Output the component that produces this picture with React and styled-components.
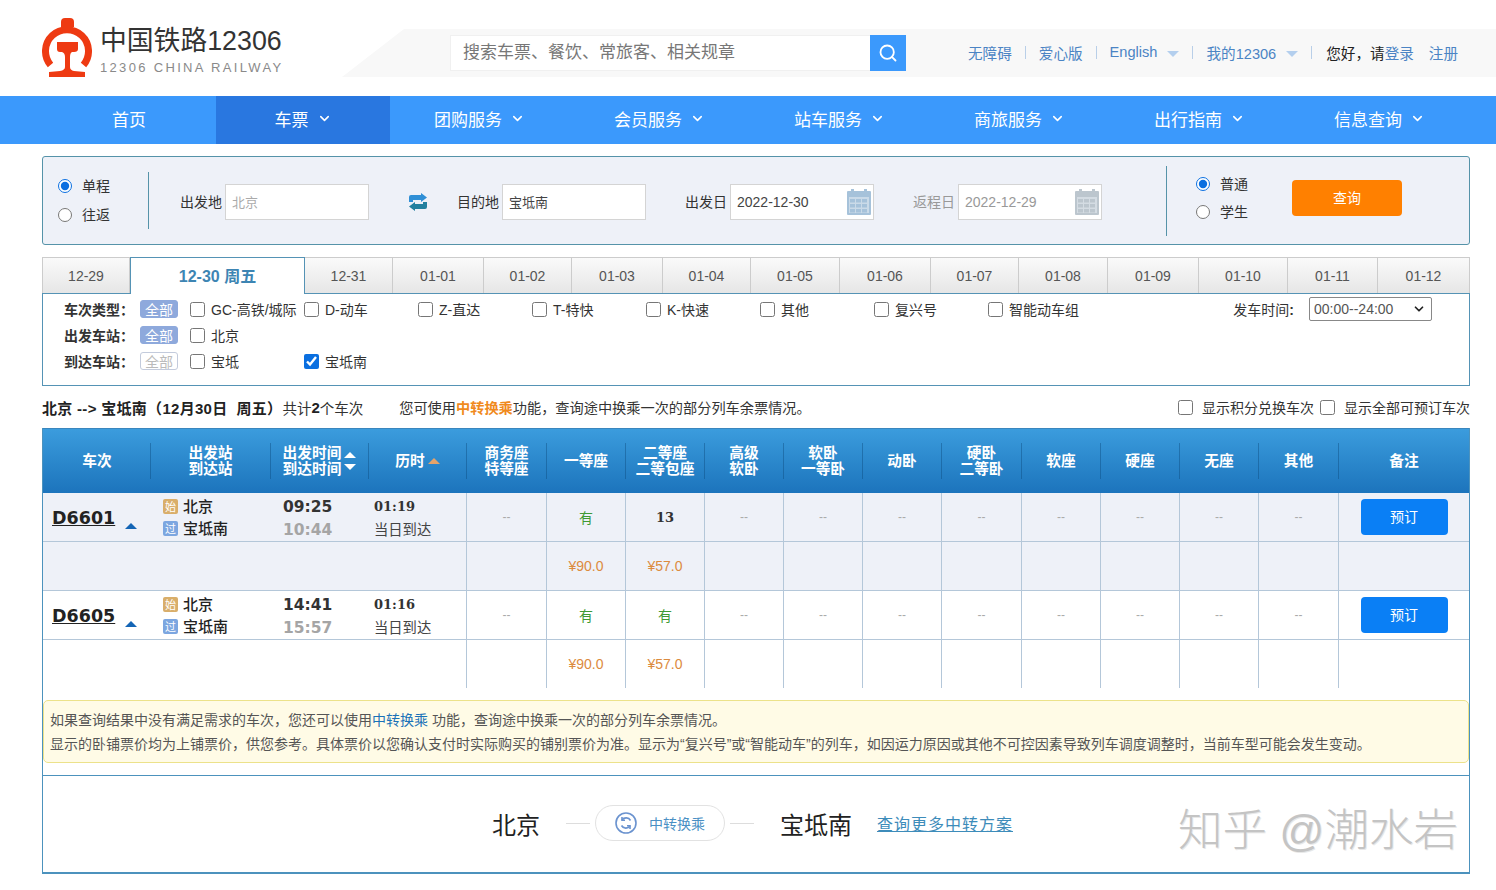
import React from "react";
import styled, { createGlobalStyle } from "styled-components";
import { ChevronDown, Search } from "lucide-react";

const Global = createGlobalStyle`
  html, body { margin: 0; padding: 0; background: #fff; }
  body { font-family: "Liberation Sans", "Noto Sans CJK SC", sans-serif; font-size: 14px; color: #333; text-spacing-trim: space-all; }
  * { box-sizing: border-box; }
`;

const Page = styled.div`width: 1496px;`;

const Header = styled.header`height: 96px; display: flex; padding: 18px 0 0 42px;`;
const LogoWrap = styled.div`width: 300px; display: flex; gap: 8px; align-items: flex-start;`;
const LogoText = styled.div`display: flex; flex-direction: column; padding-top: 5px;`;
const LogoTitle = styled.div`font-size: 26.8px; line-height: 36px; color: #333; white-space: nowrap;`;
const LogoSub = styled.div`font-size: 13px; line-height: 18px; letter-spacing: 2.33px; color: #8a8a8a; white-space: nowrap;`;

const TopPanel = styled.div`
  margin-top: 11px; height: 48px; flex: 1; background: #f8f8f8; display: flex; align-items: center;
  padding-left: 108px; clip-path: polygon(0 100%, 62px 0, 100% 0, 100% 100%);
`;
const SearchBox = styled.div`width: 456px; height: 36px; display: flex; background: #fff; border: 1px solid #f0f0f0; border-right: 0;`;
const SearchField = styled.div`flex: 1; font-size: 17px; color: #777; line-height: 34px; padding-left: 12px; white-space: nowrap;`;
const SearchBtn = styled.div`width: 36px; height: 36px; margin: -1px 0; background: #3b99fc; color: #fff; display: flex; align-items: center; justify-content: center;`;
const TopLinks = styled.div`margin-left: 62px; display: flex; align-items: center; gap: 13px; white-space: nowrap; font-size: 14.6px; padding-bottom: 2px;`;
const TopLink = styled.span`color: #4b84c4;`;
const TopGroup = styled.span`display: flex; align-items: center; gap: 10px;`;
const TopSep = styled.span`width: 1px; height: 13px; background: #b9cfe8;`;
const TopCaret = styled.span`width: 0; height: 0; border-left: 6px solid transparent; border-right: 6px solid transparent; border-top: 6px solid #b4cfee; margin-top: 3px;`;
const Hello = styled.span`color: #222; margin-left: 1px;`;
const RegLink = styled(TopLink)`margin-left: 2px;`;

const Nav = styled.nav`height: 48px; background: #3b99fc; display: flex; padding-left: 42px;`;
const NavItem = styled.div`
  width: ${p => p.$w}px; display: flex; align-items: center; gap: 8px; color: #fff; font-size: 17px; white-space: nowrap;
  justify-content: ${p => (p.$center ? "center" : "flex-start")};
  padding-left: ${p => (p.$center ? 0 : 44)}px;
  padding-bottom: 4px;
  background: ${p => (p.$active ? "#2977e0" : "transparent")};
`;

const QueryBox = styled.section`
  margin: 12px 0 0 42px; width: 1428px; height: 89px; background: #eef1f8; border: 1px solid #5593a9; border-radius: 3px;
  display: flex; align-items: center; padding-left: 15px;
`;
const RadioCol = styled.div`display: flex; flex-direction: column; gap: ${p => p.$gap}px; width: ${p => p.$w}px; margin-left: ${p => p.$ml || 0}px; margin-top: ${p => p.$mt || 0}px;`;
const RadioLabel = styled.label`display: flex; align-items: center; gap: 10px; height: 20px; color: #333; line-height: 18px;`;
const Radio = styled.input`width: 14px; height: 14px; margin: 0; accent-color: #0a6fe0;`;
const VDivider = styled.div`width: 1px; height: ${p => p.$h}px; background: #5593a9; margin-left: ${p => p.$ml || 0}px;`;
const Field = styled.div`display: flex; align-items: center; gap: 3px; margin-left: ${p => p.$ml}px; margin-top: 3px;`;
const FieldLabel = styled.span`color: ${p => (p.$muted ? "#999" : "#333")}; white-space: nowrap; padding-bottom: 2px;`;
const FieldBox = styled.div`width: 144px; height: 36px; background: #fff; border: 1px solid #d4d4d4; display: flex; align-items: center; justify-content: space-between; padding: 0 2px 0 6px;`;
const FieldValue = styled.span`font-size: ${p => (p.$date ? 14 : 13)}px; color: ${p => p.$c}; padding-bottom: ${p => (p.$date ? 0 : 2)}px;`;
const SwapWrap = styled.div`margin-left: ${p => p.$ml}px; display: flex; margin-top: 3px;`;
const QueryBtn = styled.div`width: 110px; height: 36px; background: #ff8000; border-radius: 4px; color: #fff; display: flex; align-items: center; justify-content: center; margin-left: 44px; margin-top: -6px; padding-bottom: 2px;`;

const Tabs = styled.div`margin: 12px 0 0 42px; width: 1428px; height: 36px; display: flex;`;
const Tab = styled.div`
  flex: 0 0 ${p => p.$w}px;
  height: ${p => (p.$active ? 37 : 36)}px;
  position: relative; z-index: 1;
  display: flex; align-items: center; justify-content: center;
  color: ${p => (p.$active ? "#3d85b3" : "#555")};
  font-weight: ${p => (p.$active ? 700 : 400)};
  font-size: ${p => (p.$active ? 16 : 14)}px;
  padding-bottom: ${p => (p.$active ? 3 : 0)}px;
  border: 1px solid ${p => (p.$active ? "#5593b5" : "#cccccc")};
  border-left-width: ${p => (p.$active ? 1 : 0)}px;
  border-bottom: 0;
  background: ${p => (p.$active ? "#fff" : "linear-gradient(#fafafa, #e6e6e6)")};
  &:first-child { border-left-width: 1px; }
`;
const FilterBox = styled.section`margin-left: 42px; width: 1428px; height: 93px; border: 1px solid #5593b5; padding: 2px 37px 0 21px;`;
const FilterRow = styled.div`height: 26px; display: flex; align-items: center;`;
const FilterLabel = styled.span`width: 76px; font-weight: 700; color: #333; white-space: nowrap;`;
const AllPill = styled.span`
  width: 38px; height: 18px; border-radius: 3px; display: flex; align-items: center; justify-content: center; font-size: 14px; margin-right: 12px;
  color: ${p => (p.$off ? "#bbb" : "#fff")};
  background: ${p => (p.$off ? "#fff" : "#8ea9dc")};
  border: 1px solid ${p => (p.$off ? "#c3cbdc" : "#8ea9dc")};
`;
const Option = styled.label`width: 114px; display: flex; align-items: center; gap: 6px; white-space: nowrap; color: #333;`;
const Check = styled.input`width: 15px; height: 15px; margin: 0; accent-color: #0a6fe0;`;
const TimeWrap = styled.div`margin-left: auto; display: flex; align-items: center; gap: 15px; position: relative;`;
const TimeSelect = styled.select`
  width: 123px; height: 24px; font: 14px "Liberation Sans", sans-serif; color: #555; background: #fff;
  border: 1px solid #888; border-radius: 2px; appearance: none; padding-left: 4px;
`;
const SelectCaret = styled.span`position: absolute; right: 6px; top: 5px; display: flex; color: #222; pointer-events: none;`;

const Summary = styled.div`margin-left: 42px; width: 1428px; height: 42px; display: flex; align-items: center; white-space: pre; font-size: 14.5px;`;
const Strong = styled.b`color: #222; font-size: 15px; letter-spacing: ${p => (p.$wide ? 0.3 : 0)}px;`;
const Hint = styled.span`margin-left: 36px; color: #333; font-size: 14.2px;`;
const Orange = styled.b`color: #f08a1d; font-weight: 700;`;
const SummaryChecks = styled.div`margin-left: auto; display: flex; align-items: center; font-size: 14px;`;
const SummaryCheck = styled.label`display: flex; align-items: center; gap: 9px; margin-left: 6px;`;

const TableWrap = styled.section`margin-left: 42px; width: 1428px; border-left: 1px solid #4c92bd; border-right: 1px solid #4c92bd; position: relative;`;
const COLS = "107px 120px 98px 98px 80px 79px 79px 79px 79px 79px 80px 79px 79px 79px 80px 131px";
const HeadRow = styled.div`
  display: grid; grid-template-columns: ${COLS}; align-items: center; height: 65px;
  background: linear-gradient(#3b9cdd, #1c74bc); border-top: 1px solid #3a86bd; color: #fff; font-weight: 700;
`;
const HeadCell = styled.div`
  height: 36px; display: flex; align-items: center; justify-content: center; text-align: center; line-height: 16px; font-size: 14.7px; gap: 3px;
  border-left: 1px solid ${p => (p.$first ? "transparent" : "rgba(10,70,120,.4)")};
`;
const Sorts = styled.span`display: flex; flex-direction: column; gap: 6px;`;
const Tri = styled.i`
  display: block; width: 0; height: 0; border-left: 6px solid transparent; border-right: 6px solid transparent;
  ${p => (p.$down ? `border-top: 6px solid ${p.$c};` : `border-bottom: 6px solid ${p.$c};`)}
`;
const Row = styled.div`display: grid; grid-template-columns: ${COLS}; height: ${p => (p.$last ? 48 : 49)}px; background: ${p => (p.$alt ? "#eef1f8" : "#fff")}; border-bottom: ${p => (p.$last ? 0 : "1px solid #b4c7d9")};`;
const Spacer = styled.div`grid-column: span 4;`;
const TrainCell = styled.div`display: flex; align-items: center; padding-left: 9px; gap: 10px;`;
const TrainNo = styled.span`font: 700 17.5px "DejaVu Sans", sans-serif; color: #222; text-decoration: underline; margin-top: 2px;`;
const TrainTri = styled.i`display: block; width: 0; height: 0; margin-top: 18px; border-left: 6px solid transparent; border-right: 6px solid transparent; border-bottom: 6px solid #1465b5;`;
const StackCell = styled.div`display: flex; flex-direction: column; justify-content: center; gap: ${p => p.$gap || 1}px; padding-left: ${p => p.$pl}px; padding-top: ${p => p.$pt || 0}px; padding-bottom: ${p => p.$pb || 0}px;`;
const StationLine = styled.div`display: flex; align-items: center; gap: 5px; height: 21px; color: #222; font-size: 15px; font-weight: 500;`;
const Badge = styled.span`width: 15px; height: 15px; border-radius: 2px; background: ${p => p.$c}; color: #fff; font-size: 11px; display: flex; align-items: center; justify-content: center; font-weight: 400; margin-top: 2px;`;
const TimeLine = styled.div`height: 21px; display: flex; align-items: center; font: 700 15.5px "DejaVu Sans", sans-serif; color: ${p => (p.$muted ? "#a5a5a5" : "#333")};`;
const DurLine = styled.div`height: 21px; display: flex; align-items: center; font: 700 13px "DejaVu Serif", serif; color: #333;`;
const DurNote = styled.div`height: 21px; display: flex; align-items: center; font-size: 14.3px; color: #444;`;
const Seat = styled.div`
  border-left: 1px solid #b4c7d9; display: flex; align-items: center; justify-content: center;
  color: ${p => p.$c || "#aaa"}; font: ${p => p.$f || "12px \"Liberation Sans\", \"Noto Sans CJK SC\", sans-serif"};
`;
const BookBtn = styled.div`width: 87px; height: 36px; background: #0a7ff5; border-radius: 4px; color: #fff; display: flex; align-items: center; justify-content: center; font-size: 14px; padding-bottom: 2px;`;

const Note = styled.div`
  margin: 12px 0 12px 0; height: 63px; background: #fffbe6; border: 1px solid #ece28a; border-radius: 5px;
  padding: 7px 6px; line-height: 24px; color: #555; font-size: 14px; white-space: nowrap;
`;
const NoteLink = styled.span`color: #1a72b8;`;
const Transfer = styled.div`
  height: 99px; border-top: 1px solid #4c92bd; border-bottom: 2px solid #4c92bd; display: flex; align-items: center; justify-content: center; padding-right: 7px; margin: 0 -1px;
  border-left: 1px solid #4c92bd; border-right: 1px solid #4c92bd; position: relative; padding-bottom: 2px;
`;
const City = styled.span`font-size: 24px; color: #222;`;
const Dash = styled.span`width: 24px; height: 1px; background: #ddd; margin: ${p => p.$m};`;
const Pill = styled.div`width: 130px; height: 36px; border: 1px solid #e2e2e2; border-radius: 18px; display: flex; align-items: center; justify-content: center; gap: 12px; color: #4a90c4; font-size: 14px;`;
const MoreLink = styled.span`margin-left: 25px; font-size: 16px; letter-spacing: 1px; color: #3d8cba; text-decoration: underline;`;
const Watermark = styled.div`
  position: absolute; right: 11px; top: 25px; font-size: 44.5px; font-weight: 300; color: #c4c4c4; white-space: nowrap; line-height: 60px;
  text-shadow: 1px 1px 0 #e8e8e8;
`;

const Logo = () => (
  <svg width="50" height="59" viewBox="0 0 50 59">
    <path d="M8.5 47 A21.5 21.5 0 1 1 41.5 47" fill="none" stroke="#ee3a12" strokeWidth="7" />
    <path d="M19 9 V4 Q19 0 23 0 H28 Q32 0 32 4 V9 Z" fill="#ee3a12" />
    <path d="M15 24 H36 V31 Q36 34 32 34 H30 Q28 35 28 39 V49 Q28 52 32 53 L43 54 V59 H7 V54 L18 53 Q23 52 23 49 V39 Q23 35 20 34 H18 Q15 34 15 31 Z" fill="#ee3a12" />
  </svg>
);
const Swap = () => (
  <svg width="20" height="18" viewBox="0 0 20 18">
    <path d="M1 9 V4 Q1 2 3 2 H13 V0 L19 4.5 L13 9 V7 H5 V9 Z" fill="#2f8fd6" />
    <path d="M19 9 V14 Q19 16 17 16 H7 V18 L1 13.5 L7 9 V11 H15 V9 Z" fill="#23809f" />
  </svg>
);
const Calendar = ({ c }) => (
  <svg width="24" height="26" viewBox="0 0 24 26">
    <rect x="0" y="2" width="24" height="24" rx="1" fill={c} />
    <rect x="4" y="0" width="3" height="4" fill={c} />
    <rect x="17" y="0" width="3" height="4" fill={c} />
    <rect x="2" y="8" width="20" height="16" fill="#e8eef4" opacity=".55" />
    {[3, 9, 15].flatMap(x => [10, 15, 20].map(y => <rect key={x + "-" + y} x={x} y={y} width="5" height="3.5" fill={c} />))}
  </svg>
);
const TransferIcon = () => (
  <svg width="22" height="22" viewBox="0 0 22 22" fill="none" stroke="#6b93cf" strokeWidth="1.6">
    <circle cx="11" cy="11" r="10" />
    <path d="M15.5 8.5 A5 5 0 0 0 7 8" />
    <path d="M6.5 13.5 A5 5 0 0 0 15 14" />
    <path d="M7 5 V8.3 H10" />
    <path d="M15 17 V13.8 H12" />
  </svg>
);

const navItems = ["团购服务", "会员服务", "站车服务", "商旅服务", "出行指南", "信息查询"];
const dates = [
  ["12-29", 88], ["12-30 周五", 175], ["12-31", 88], ["01-01", 91], ["01-02", 88], ["01-03", 91], ["01-04", 88], ["01-05", 89],
  ["01-06", 91], ["01-07", 88], ["01-08", 89], ["01-09", 91], ["01-10", 89], ["01-11", 90], ["01-12", 92],
];
const types = ["GC-高铁/城际", "D-动车", "Z-直达", "T-特快", "K-快速", "其他", "复兴号", "智能动车组"];
const heads = [["商务座", "特等座"], ["一等座"], ["二等座", "二等包座"], ["高级", "软卧"], ["软卧", "一等卧"], ["动卧"], ["硬卧", "二等卧"], ["软座"], ["硬座"], ["无座"], ["其他"], ["备注"]];
const trains = [
  { no: "D6601", dep: "09:25", arr: "10:44", dur: "01:19", second: "13", alt: true },
  { no: "D6605", dep: "14:41", arr: "15:57", dur: "01:16", second: "有", alt: false },
];
const GREEN = "#3f9a34";
const FONT_BOLD_NUM = "700 13px \"DejaVu Serif\", serif";
const FONT_SEAT = "14px \"Noto Sans CJK SC\", sans-serif";
const FONT_PRICE = "14px \"Liberation Sans\", sans-serif";
const PRICE = "#dc8b3e";

const Lines = ({ items }) => items.map((t, i) => <div key={i}>{t}</div>);

const TrainRows = ({ t }) => (
  <>
    <Row $alt={t.alt}>
      <TrainCell><TrainNo>{t.no}</TrainNo><TrainTri /></TrainCell>
      <StackCell $pl={13} $pb={2}>
        <StationLine><Badge $c="#d9ae6a">始</Badge>北京</StationLine>
        <StationLine><Badge $c="#7ca6e0">过</Badge>宝坻南</StationLine>
      </StackCell>
      <StackCell $pl={13} $gap={2} $pt={2}>
        <TimeLine>{t.dep}</TimeLine>
        <TimeLine $muted>{t.arr}</TimeLine>
      </StackCell>
      <StackCell $pl={6} $pt={1}>
        <DurLine>{t.dur}</DurLine>
        <DurNote>当日到达</DurNote>
      </StackCell>
      <Seat>--</Seat>
      <Seat $c={GREEN} $f={FONT_SEAT}>有</Seat>
      {t.second === "有"
        ? <Seat $c={GREEN} $f={FONT_SEAT}>有</Seat>
        : <Seat $c="#333" $f={FONT_BOLD_NUM}>{t.second}</Seat>}
      {Array.from({ length: 8 }, (_, i) => <Seat key={i}>--</Seat>)}
      <Seat><BookBtn>预订</BookBtn></Seat>
    </Row>
    <Row $alt={t.alt} $last={!t.alt}>
      <Spacer />
      <Seat />
      <Seat $c={PRICE} $f={FONT_PRICE}>¥90.0</Seat>
      <Seat $c={PRICE} $f={FONT_PRICE}>¥57.0</Seat>
      {Array.from({ length: 9 }, (_, i) => <Seat key={i} />)}
    </Row>
  </>
);

export default function App() {
  return (
    <Page>
      <Global />
      <Header>
        <LogoWrap>
          <Logo />
          <LogoText>
            <LogoTitle>中国铁路12306</LogoTitle>
            <LogoSub>12306 CHINA RAILWAY</LogoSub>
          </LogoText>
        </LogoWrap>
        <TopPanel>
          <SearchBox>
            <SearchField>搜索车票、餐饮、常旅客、相关规章</SearchField>
            <SearchBtn><Search size={20} strokeWidth={2.2} /></SearchBtn>
          </SearchBox>
          <TopLinks>
            <TopLink>无障碍</TopLink><TopSep />
            <TopLink>爱心版</TopLink><TopSep />
            <TopGroup><TopLink>English</TopLink><TopCaret /></TopGroup><TopSep />
            <TopGroup><TopLink>我的12306</TopLink><TopCaret /></TopGroup><TopSep />
            <span><Hello>您好，请</Hello><TopLink>登录</TopLink></span>
            <RegLink>注册</RegLink>
          </TopLinks>
        </TopPanel>
      </Header>

      <Nav>
        <NavItem $w={174} $center>首页</NavItem>
        <NavItem $w={174} $center $active>车票<ChevronDown size={15} strokeWidth={2.5} /></NavItem>
        {navItems.map(n => (
          <NavItem key={n} $w={180}>{n}<ChevronDown size={15} strokeWidth={2.5} /></NavItem>
        ))}
      </Nav>

      <QueryBox>
        <RadioCol $w={90} $gap={9}>
          <RadioLabel><Radio type="radio" name="trip" defaultChecked />单程</RadioLabel>
          <RadioLabel><Radio type="radio" name="trip" />往返</RadioLabel>
        </RadioCol>
        <VDivider $h={57} />
        <Field $ml={31}>
          <FieldLabel>出发地</FieldLabel>
          <FieldBox><FieldValue $c="#aaa">北京</FieldValue></FieldBox>
        </Field>
        <SwapWrap $ml={39}><Swap /></SwapWrap>
        <Field $ml={29}>
          <FieldLabel>目的地</FieldLabel>
          <FieldBox><FieldValue $c="#444">宝坻南</FieldValue></FieldBox>
        </Field>
        <Field $ml={39}>
          <FieldLabel>出发日</FieldLabel>
          <FieldBox><FieldValue $date $c="#444">2022-12-30</FieldValue><Calendar c="#a6c2da" /></FieldBox>
        </Field>
        <Field $ml={39}>
          <FieldLabel $muted>返程日</FieldLabel>
          <FieldBox><FieldValue $date $c="#999">2022-12-29</FieldValue><Calendar c="#bcc6ce" /></FieldBox>
        </Field>
        <VDivider $h={70} $ml={64} />
        <RadioCol $w={52} $gap={8} $ml={29} $mt={-5}>
          <RadioLabel><Radio type="radio" name="kind" defaultChecked />普通</RadioLabel>
          <RadioLabel><Radio type="radio" name="kind" />学生</RadioLabel>
        </RadioCol>
        <QueryBtn>查询</QueryBtn>
      </QueryBox>

      <Tabs>
        {dates.map(([d, w], i) => <Tab key={d} $w={w} $active={i === 1}>{d}</Tab>)}
      </Tabs>
      <FilterBox>
        <FilterRow>
          <FilterLabel>车次类型：</FilterLabel>
          <AllPill>全部</AllPill>
          {types.map(t => <Option key={t}><Check type="checkbox" />{t}</Option>)}
          <TimeWrap>
            <span>发车时间<b>:</b></span>
            <TimeSelect defaultValue="all"><option value="all">00:00--24:00</option></TimeSelect>
            <SelectCaret><ChevronDown size={14} strokeWidth={3} /></SelectCaret>
          </TimeWrap>
        </FilterRow>
        <FilterRow>
          <FilterLabel>出发车站：</FilterLabel>
          <AllPill>全部</AllPill>
          <Option><Check type="checkbox" />北京</Option>
        </FilterRow>
        <FilterRow>
          <FilterLabel>到达车站：</FilterLabel>
          <AllPill $off>全部</AllPill>
          <Option><Check type="checkbox" />宝坻</Option>
          <Option><Check type="checkbox" defaultChecked />宝坻南</Option>
        </FilterRow>
      </FilterBox>

      <Summary>
        <Strong $wide>北京 --&gt; 宝坻南（12月30日  周五）</Strong>共计<Strong>2</Strong>个车次
        <Hint>您可使用<Orange>中转换乘</Orange>功能，查询途中换乘一次的部分列车余票情况。</Hint>
        <SummaryChecks>
          <SummaryCheck><Check type="checkbox" />显示积分兑换车次</SummaryCheck>
          <SummaryCheck><Check type="checkbox" />显示全部可预订车次</SummaryCheck>
        </SummaryChecks>
      </Summary>

      <TableWrap>
        <HeadRow>
          <HeadCell $first>车次</HeadCell>
          <HeadCell><div><div>出发站</div><div>到达站</div></div></HeadCell>
          <HeadCell>
            <div><div>出发时间</div><div>到达时间</div></div>
            <Sorts><Tri $c="#fff" /><Tri $c="#fff" $down /></Sorts>
          </HeadCell>
          <HeadCell>历时<Tri $c="#e5a36a" /></HeadCell>
          {heads.map(h => <HeadCell key={h.join()}><div><Lines items={h} /></div></HeadCell>)}
        </HeadRow>
        {trains.map(t => <TrainRows key={t.no} t={t} />)}
        <Note>
          <div>如果查询结果中没有满足需求的车次，您还可以使用<NoteLink>中转换乘</NoteLink> 功能，查询途中换乘一次的部分列车余票情况。</div>
          <div>显示的卧铺票价均为上铺票价，供您参考。具体票价以您确认支付时实际购买的铺别票价为准。显示为“复兴号”或“智能动车”的列车，如因运力原因或其他不可控因素导致列车调度调整时，当前车型可能会发生变动。</div>
        </Note>
        <Transfer>
          <City>北京</City>
          <Dash $m="0 5px 0 26px" />
          <Pill><TransferIcon />中转换乘</Pill>
          <Dash $m="0 26px 0 5px" />
          <City>宝坻南</City>
          <MoreLink>查询更多中转方案</MoreLink>
          <Watermark>知乎 @潮水岩</Watermark>
        </Transfer>
      </TableWrap>
    </Page>
  );
}
